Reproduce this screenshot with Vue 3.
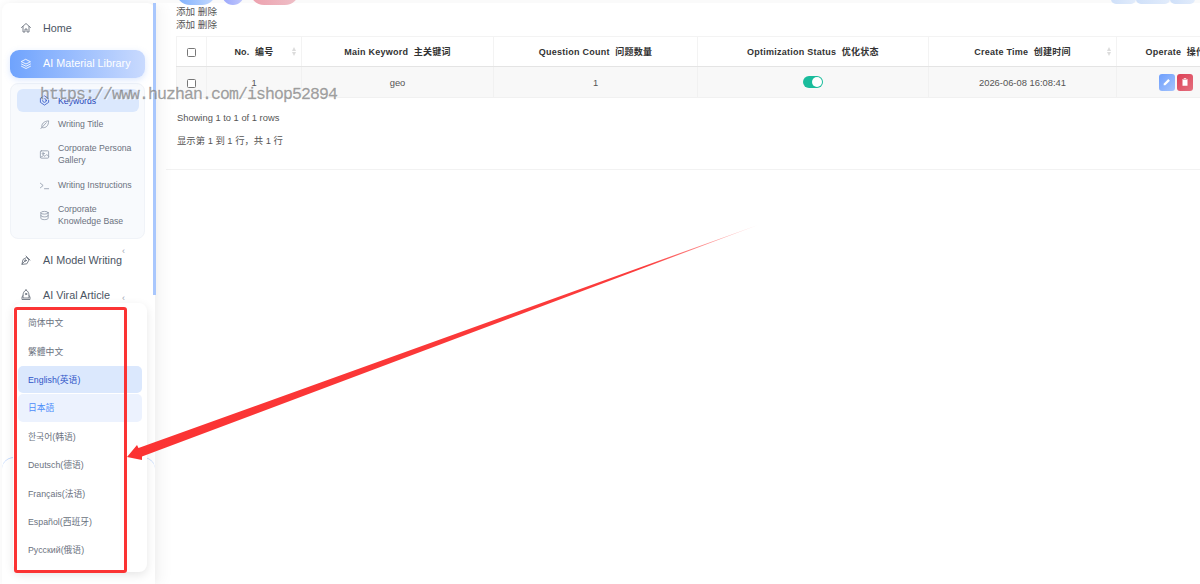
<script setup>
const sub = [
  { key: 'search', label: ['Keywords'], active: true },
  { key: 'feather', label: ['Writing Title'] },
  { key: 'image', label: ['Corporate Persona', 'Gallery'] },
  { key: 'term', label: ['Writing Instructions'] },
  { key: 'db', label: ['Corporate', 'Knowledge Base'] },
]
const langs = [
  { t: '简体中文' },
  { t: '繁體中文' },
  { t: 'English(英语)', c: 'sel' },
  { t: '日本語', c: 'hov' },
  { t: '한국어(韩语)' },
  { t: 'Deutsch(德语)' },
  { t: 'Français(法语)' },
  { t: 'Español(西班牙)' },
  { t: 'Русский(俄语)' },
]
const cols = [
  { t: 'No.  编号', s: true, w: 95 },
  { t: 'Main Keyword  主关键词', w: 192 },
  { t: 'Question Count  问题数量', w: 204 },
  { t: 'Optimization Status  优化状态', w: 231 },
  { t: 'Create Time  创建时间', s: true, w: 188 },
  { t: 'Operate  操作', w: 118 },
]
</script>

<template>
  <div class="page">
    <aside class="side">
      <div class="thumb"></div>
      <nav class="nav">
        <div class="item home">
          <svg class="ic" viewBox="0 0 24 24"><path d="M3 11l9-8 9 8M6 9v11h4v-6h4v6h4V9"/></svg>
          <span>Home</span>
        </div>
        <div class="item on">
          <svg class="ic" viewBox="0 0 24 24"><path d="M12 3l9 4.500-9 4.500-9-4.500zM3 12l9 4.500 9-4.500M3 16.500L12 21l9-4.500"/></svg>
          <span>AI Material Library</span>
        </div>
        <div class="subbox">
          <div v-for="s in sub" :key="s.key" class="sub" :class="{ act: s.active }">
            <svg v-if="s.key==='search'" class="sic" viewBox="0 0 24 24"><path d="M12 2l9 6v8l-9 6-9-6V8z"/><circle cx="12" cy="12" r="4"/></svg>
            <svg v-else-if="s.key==='feather'" class="sic" viewBox="0 0 24 24"><path d="M4 21L16 8M6 18c-1-7 4-13 15-14 0 11-6 16-13 15"/></svg>
            <svg v-else-if="s.key==='image'" class="sic" viewBox="0 0 24 24"><rect x="3" y="4" width="18" height="16" rx="2"/><circle cx="9" cy="10" r="2"/><path d="M4 18l6-4 3 2 4-4 4 4"/></svg>
            <svg v-else-if="s.key==='term'" class="sic" viewBox="0 0 24 24"><path d="M3 7l6 5-6 5M12 19h9"/></svg>
            <svg v-else class="sic" viewBox="0 0 24 24"><ellipse cx="12" cy="6" rx="8" ry="3"/><path d="M4 6v12c0 1.700 3.600 3 8 3s8-1.300 8-3V6M4 12c0 1.700 3.600 3 8 3s8-1.300 8-3"/></svg>
            <div class="stext"><div v-for="l in s.label" :key="l">{{ l }}</div></div>
          </div>
        </div>
        <div class="item plain">
          <svg class="ic" viewBox="0 0 24 24"><path d="M4 20l2-9 7-4 5 5-4 7zM12 4l8 8M4 20l6-6"/><circle cx="11" cy="13" r="1.500"/></svg>
          <span>AI Model Writing</span>
          <i class="chev a">‹</i>
        </div>
        <div class="item plain">
          <svg class="ic" viewBox="0 0 24 24"><path d="M12 2c4 2 6 6 6 11v5H6v-5c0-5 2-9 6-11zM6 13l-2 3v5h16v-5l-2-3"/><circle cx="12" cy="10" r="1.500"/></svg>
          <span>AI Viral Article</span>
          <i class="chev b">‹</i>
        </div>
      </nav>
      <div class="foot"></div>
    </aside>

    <main class="main">
      <div class="tools">
        <div class="btns">
          <b class="pill blue"></b><b class="pill violet"></b><b class="pill pink"></b>
        </div>
        <div class="rbtns"><b class="r r1"></b><b class="r r2"></b><b class="r r3"></b></div>
      </div>
      <div class="card">
        <div class="lines"><div>添加 删除</div><div>添加 删除</div></div>
        <table class="tbl">
          <thead>
            <tr>
              <th class="chk"><span class="box"></span></th>
              <th v-for="c in cols" :key="c.t" :style="{ width: c.w + 'px' }">
                <span class="hd">{{ c.t }}</span>
                <span v-if="c.s" class="sort"><i class="up"></i><i class="dn"></i></span>
              </th>
            </tr>
          </thead>
          <tbody>
            <tr>
              <td class="chk"><span class="box"></span></td>
              <td>1</td>
              <td>geo</td>
              <td>1</td>
              <td><span class="sw"><i></i></span></td>
              <td>2026-06-08 16:08:41</td>
              <td>
                <div class="ops">
                  <span class="op edit"><svg viewBox="0 0 24 24"><path d="M4 20v-4L15 5l4 4L8 20z" fill="#fff"/></svg></span>
                  <span class="op del"><svg viewBox="0 0 24 24"><path d="M6 7h12v14H6zM9 3h6v2h4v1H5V5h4z" fill="#fff"/></svg></span>
                </div>
              </td>
            </tr>
          </tbody>
        </table>
        <p class="info first">Showing 1 to 1 of 1 rows</p>
        <p class="info">显示第 1 到 1 行，共 1 行</p>
      </div>
    </main>

    <div class="menu">
      <div v-for="l in langs" :key="l.t" class="lang" :class="l.c">{{ l.t }}</div>
    </div>
    <div class="redbox"></div>

    <svg class="arrow" viewBox="0 0 1200 584">
      <defs>
        <linearGradient id="g" gradientUnits="userSpaceOnUse" x1="130" y1="457" x2="758" y2="225">
          <stop offset="0" stop-color="#fb3333"/>
          <stop offset="0.82" stop-color="#fb3c3c"/>
          <stop offset="1" stop-color="#ffd4d4"/>
        </linearGradient>
      </defs>
      <polygon fill="url(#g)" points="127,457 137,445 138.500,448 758,225 142,456.500 142,460"/>
    </svg>

    <div class="wm">https://www.huzhan.com/ishop52894</div>
  </div>
</template>

<style>
html, body { margin: 0; background: #fff; }
</style>

<style scoped>
.page {
  position: relative;
  width: 1200px;
  height: 584px;
  overflow: hidden;
  display: flex;
  background: #fff;
  font-family: "Liberation Sans", "Noto Sans CJK SC", sans-serif;
  color: #555;
}
.side {
  position: relative;
  flex: 0 0 153px;
  margin: 3px 0 0 2px;
  height: 581px;
  background: #fff;
  border-radius: 8px 8px 0 0;
  box-shadow: 0 0 8px rgba(0, 0, 0, .05), 9px 0 12px rgba(0, 0, 0, .03);
  display: flex;
  flex-direction: column;
}
.thumb {
  position: absolute;
  right: -1px;
  top: 0;
  width: 3px;
  height: 292px;
  background: #a9c7fd;
}
.nav { padding: 11px 10px 0 8px; display: flex; flex-direction: column; }
.item {
  height: 28px;
  display: flex;
  align-items: center;
  padding-left: 10px;
  gap: 11px;
  font-size: 10.800px;
  color: #4b5563;
  margin-bottom: 7px;
  position: relative;
}
.item.home { margin-bottom: 8px; }
.item.on {
  background: linear-gradient(90deg, #6fa3fd, #c9dafe);
  color: #fff;
  border-radius: 9px;
  box-shadow: 0 2px 6px rgba(110, 160, 250, .25);
  margin-bottom: 5px;
}
.item.on span { position: relative; top: -1px; }
.ic { width: 12px; height: 12px; fill: none; stroke: currentColor; stroke-width: 1.700; stroke-linejoin: round; stroke-linecap: round; flex: none; opacity: .85; }
.on .ic { opacity: 1; }
.subbox {
  box-sizing: border-box;
  background: #f8fafd;
  border: 1px solid #f0f3f8;
  border-radius: 8px;
  padding: 5px 5px 0 6px;
  margin-bottom: 7px;
  height: 156px;
}
.sub {
  display: flex;
  align-items: center;
  min-height: 24px;
  padding-left: 22px;
  gap: 8px;
  font-size: 8.700px;
  line-height: 12px;
  color: #6b7280;
  border-radius: 6px;
}
.sub.act { min-height: 23px; background: #dbe8fd; color: #2746b8; }
.sub:nth-child(3) { min-height: 36px; }
.sub:nth-child(4) { margin-top: 1px; }
.sub:nth-child(5) { min-height: 36px; }
.sic { width: 11px; height: 11px; fill: none; stroke: #8a94a5; stroke-width: 1.700; flex: none; stroke-linecap: round; stroke-linejoin: round; }
.act .sic { stroke: #2f52c4; }
.chev { position: absolute; font-style: normal; font-size: 9px; color: #9aa3af; }
.chev.a { left: 112px; top: 0; }
.chev.b { left: 112px; top: 12px; }
.foot {
  position: absolute;
  left: 0;
  right: 0;
  top: 454px;
  bottom: 0;
  background: #fff;
  border-top: 1px solid #bcd4fb;
  border-radius: 12px 12px 0 0;
}
.main { flex: 1; min-width: 0; display: flex; flex-direction: column; padding-left: 11px; overflow: hidden; }
.tools { height: 3px; flex: none; display: flex; justify-content: space-between; background: #fafafa; position: relative; margin-left: -11px; padding: 0 5px 0 21px; }
.btns { display: flex; gap: 6px; margin-top: -12px; }
.pill { display: block; height: 17px; border-radius: 0 0 14px 14px; }
.blue { width: 40px; background: linear-gradient(90deg, #7eb0fd, #c6dafe); }
.violet { width: 22px; background: linear-gradient(90deg, #9aa6fb, #c2c9fd); }
.pink { width: 49px; background: linear-gradient(90deg, #eda0ad, #eec0c8); }
.rbtns { display: flex; margin-top: -4px; }
.r { display: block; height: 8px; border-radius: 0 0 5px 5px; background: linear-gradient(90deg, #cfe0f9, #e2ecfb); }
.r1 { width: 25px; } .r2 { width: 34px; } .r3 { width: 25px; }
.card { flex: none; height: 167px; border-bottom: 1px solid #f2f2f2; padding-left: 10px; width: 1100px; box-sizing: border-box; }
.lines { font-size: 9.600px; line-height: 13px; color: #555; padding-top: 2px; height: 31px; box-sizing: content-box; }
.tbl {
  border-collapse: collapse;
  table-layout: fixed;
  width: 1058px;
  font-size: 9.400px;
  color: #555;
  text-align: center;
}
.tbl th {
  box-sizing: border-box;
  height: 30px;
  padding: 0;
  border: 1px solid #f3f3f3;
  border-bottom: 1px solid #e4e4e4;
  font-size: 9px;
  letter-spacing: .25px;
  color: #333;
  position: relative;
  white-space: pre;
}
.tbl td { box-sizing: border-box; height: 31px; padding: 0; background: #f8f8f8; border: 1px solid #f1f1f1; }
.chk { width: 30px; }
.box { display: inline-block; width: 7px; height: 7px; border: 1px solid #777; border-radius: 1.500px; background: #fff; vertical-align: middle; }
.sort { position: absolute; right: 5px; top: 10px; display: flex; flex-direction: column; gap: 1px; }
.up { width: 0; height: 0; border: 2.500px solid transparent; border-top: 0; border-bottom: 4px solid #dcdcdc; }
.dn { width: 0; height: 0; border: 2.500px solid transparent; border-bottom: 0; border-top: 4px solid #dcdcdc; }
.sw { display: inline-block; width: 20px; height: 12px; background: #1abc9c; border-radius: 6px; position: relative; vertical-align: middle; }
.sw i { position: absolute; right: 1px; top: 1px; width: 10px; height: 10px; background: #fff; border-radius: 50%; }
.ops { display: flex; justify-content: center; gap: 2px; }
.op { width: 16px; height: 17px; border-radius: 3px; display: flex; align-items: center; justify-content: center; }
.op svg { width: 10px; height: 10px; }
.edit { background: linear-gradient(135deg, #6d9efc, #a5c4fd); }
.del { background: linear-gradient(135deg, #dc3f55, #e4707f); }
.info { margin: 0 0 0 1px; font-size: 9.350px; line-height: 12px; color: #555; }
.info.first { margin-top: 14px; margin-bottom: 11px; }
.menu {
  position: absolute;
  left: 13px;
  top: 303px;
  width: 134px;
  height: 269px;
  box-sizing: border-box;
  padding: 6px 5px 0;
  background: #fff;
  border-radius: 8px;
  box-shadow: 0 3px 10px rgba(0, 0, 0, .1);
  display: flex;
  flex-direction: column;
  gap: 1px;
}
.lang {
  height: 27.400px;
  flex: none;
  display: flex;
  align-items: center;
  padding-left: 10px;
  font-size: 8.800px;
  color: #6b7280;
  border-radius: 5px;
}
.lang.sel { background: #dbe8fd; color: #3056c8; }
.lang.hov { background: #ecf2fe; color: #4d8dfa; }
.redbox {
  position: absolute;
  left: 14px;
  top: 307px;
  width: 113px;
  height: 266px;
  box-sizing: border-box;
  border: 3px solid #fb3333;
  border-radius: 3px;
}
.arrow { position: absolute; inset: 0; width: 1200px; height: 584px; pointer-events: none; }
.wm {
  position: absolute;
  left: 40px;
  top: 86px;
  font-family: "Liberation Mono", monospace;
  font-size: 16.500px;
  letter-spacing: -.9px;
  line-height: 18px;
  white-space: nowrap;
  color: rgba(125, 125, 125, .7);
  -webkit-text-stroke: .3px rgba(125, 125, 125, .6);
  text-shadow: 1px 1px 0 rgba(255, 255, 255, .7);
}
</style>
